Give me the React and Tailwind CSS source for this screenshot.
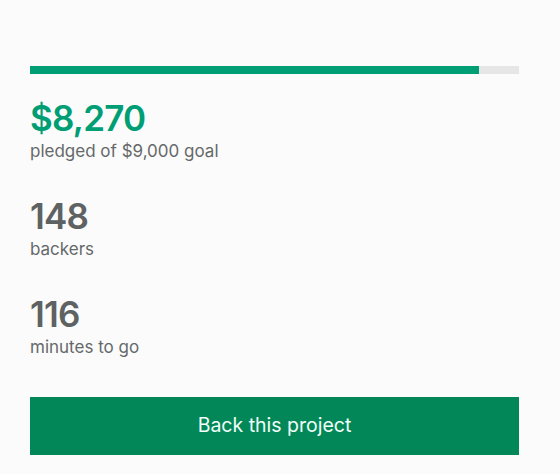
export default function App() {
  const pledged = 8270;
  const goal = 9000;
  const pct = Math.min(100, (pledged / goal) * 100);

  return (
    <div className="min-h-[474px] w-[560px] bg-[#fbfbfb] font-['Inter',sans-serif]">
      <div className="w-[489px] pl-[30px] pt-[66px] box-content">
        <div className="h-2 w-full bg-[#e6e6e6]">
          <div className="h-full bg-[#009e74]" style={{ width: `${pct}%` }} />
        </div>

        <div className="mt-[24px]">
          <div className="text-[35px] font-semibold leading-[40px] tracking-[-0.8px] text-[#009e74]">$8,270</div>
          <div className="mt-[2px] text-[17px] leading-[22px] text-[#656969]">pledged of $9,000 goal</div>
        </div>

        <div className="mt-[34px]">
          <div className="text-[35px] font-semibold leading-[40px] tracking-[-0.8px] text-[#5e6262]">148</div>
          <div className="mt-[2px] text-[17px] leading-[22px] text-[#656969]">backers</div>
        </div>

        <div className="mt-[34px]">
          <div className="text-[35px] font-semibold leading-[40px] tracking-[-0.8px] text-[#5e6262]">116</div>
          <div className="mt-[2px] text-[17px] leading-[22px] text-[#656969]">minutes to go</div>
        </div>

        <button className="mt-[39px] flex h-[58px] w-full items-center justify-center bg-[#028858] text-[19.5px] text-[#f2fff8]">
          Back this project
        </button>
      </div>
    </div>
  );
}
